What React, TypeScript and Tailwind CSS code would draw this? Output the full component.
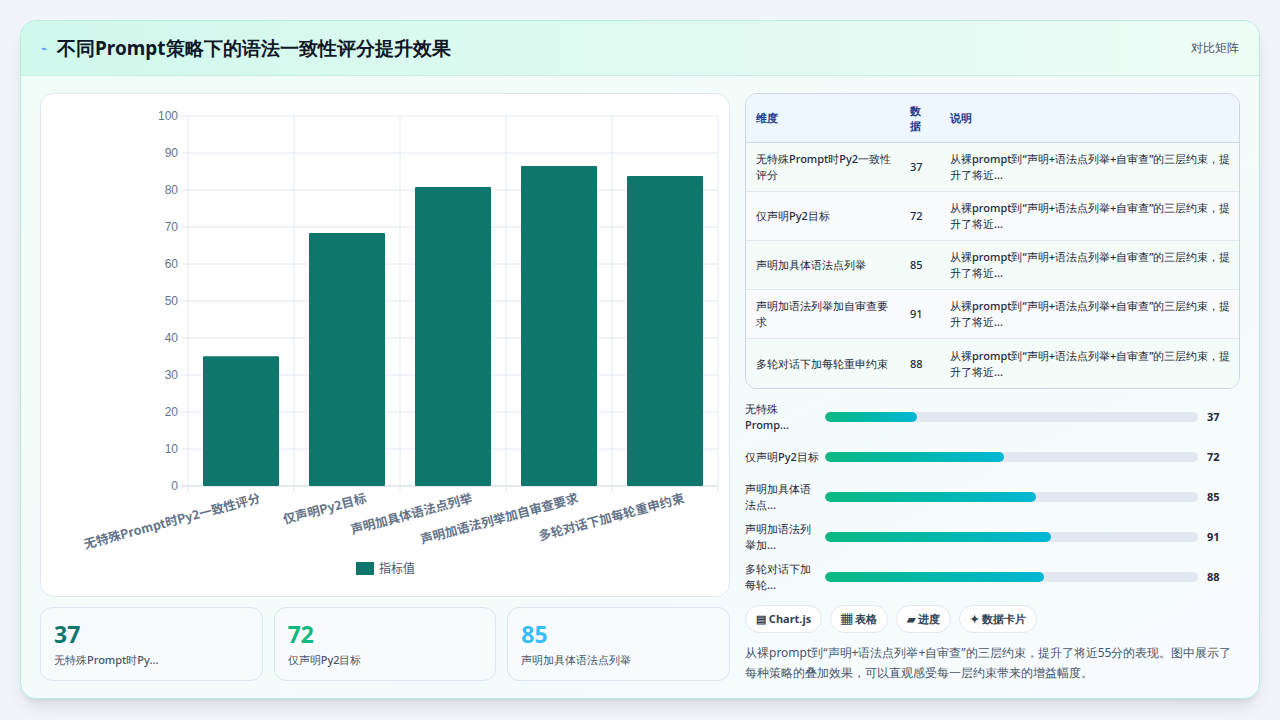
import React from "react";

const rows = [
  { n: "无特殊Prompt时Py2一致性评分", s: "无特殊Promp...", v: 37, b: 35.1 },
  { n: "仅声明Py2目标", s: "仅声明Py2目标", v: 72, b: 68.4 },
  { n: "声明加具体语法点列举", s: "声明加具体语法点...", v: 85, b: 80.8 },
  { n: "声明加语法列举加自审查要求", s: "声明加语法列举加...", v: 91, b: 86.5 },
  { n: "多轮对话下加每轮重申约束", s: "多轮对话下加每轮...", v: 88, b: 83.8 },
];
const desc = "从裸prompt到“声明+语法点列举+自审查”的三层约束，提升了将近...";

function Chart() {
  const x0 = 147, x1 = 677, y0 = 22, y1 = 392;
  const cw = (x1 - x0) / 5;
  const ticks = [0, 10, 20, 30, 40, 50, 60, 70, 80, 90, 100];
  return (
    <svg width="688" height="502" className="block">
      {ticks.map((t) => {
        const y = y1 - (t / 100) * (y1 - y0);
        return (
          <g key={t}>
            <line x1={x0 - 6} x2={x1} y1={y} y2={y} stroke={t === 0 ? "#cbd5e1" : "#e2e8f0"} />
            <text x={x0 - 10} y={y + 4} textAnchor="end" fontSize="12" fill="#64748b" fontFamily="Liberation Sans, sans-serif">{t}</text>
          </g>
        );
      })}
      {[0, 1, 2, 3, 4, 5].map((i) => (
        <line key={i} x1={x0 + i * cw} x2={x0 + i * cw} y1={y0} y2={y1 + 6} stroke="#e2e8f0" />
      ))}
      {rows.map((r, i) => {
        const h = (r.b / 100) * (y1 - y0);
        return <rect key={i} x={x0 + i * cw + 15} y={y1 - h} width={76} height={h} fill="#0f766e" rx="1" />;
      })}
      {rows.map((r, i) => (
        <text key={i} transform={`translate(${x0 + i * cw + cw / 2 + 20},${y1 + 16}) rotate(-15)`} textAnchor="end" fontSize="12.5" fontWeight="bold" fill="#64748b" fontFamily="Noto Sans CJK SC, sans-serif">{r.n}</text>
      ))}
      <rect x={315} y={468} width={18} height={13} fill="#0f766e" />
      <text x={338} y={479} fontSize="12" fill="#475569" fontFamily="Noto Sans CJK SC, sans-serif">指标值</text>
    </svg>
  );
}

export default function App() {
  return (
    <div className="w-[1280px] h-[720px] bg-[#f1f5f9] p-[20px] pb-[21px] font-['Noto_Sans_CJK_SC',sans-serif]">
      <div className="h-full rounded-[16px] border border-[#b8ecdd] bg-gradient-to-br from-[#f0fdf7] to-[#f8fbff] overflow-hidden flex flex-col shadow-lg">
        <div className="h-[55px] shrink-0 flex items-center justify-between px-[20px] bg-gradient-to-r from-[#d0f8ec] to-[#eefcf6] border-b border-[#c9efe2]">
          <div className="flex items-center gap-[10px]">
            <span className="text-[10px] text-[#3b82f6]">⌁</span>
            <h1 className="text-[19px] font-bold text-[#0f172a]">不同Prompt策略下的语法一致性评分提升效果</h1>
          </div>
          <span className="text-[12px] text-[#475569]">对比矩阵</span>
        </div>
        <div className="flex-1 flex gap-[15px] px-[19px] pt-[17px] pb-[17px]">
          <div className="w-[690px] flex flex-col gap-[10px]">
            <div className="h-[504px] bg-white rounded-[14px] border border-[#e2e8f0]">
              <Chart />
            </div>
            <div className="flex gap-[11px]">
              {[
                { v: 37, c: "text-[#0f766e]", l: "无特殊Prompt时Py..." },
                { v: 72, c: "text-[#10b981]", l: "仅声明Py2目标" },
                { v: 85, c: "text-[#38bdf8]", l: "声明加具体语法点列举" },
              ].map((s, i) => (
                <div key={i} className="flex-1 h-[74px] rounded-[12px] border border-[#dbe5f0] bg-[#f8fbfe] px-[13px] pt-[12px]">
                  <div className={`text-[23px] font-bold leading-[28px] ${s.c}`}>{s.v}</div>
                  <div className="text-[11px] text-[#475569] mt-[4px] font-medium">{s.l}</div>
                </div>
              ))}
            </div>
          </div>
          <div className="flex-1 flex flex-col">
            <div className="rounded-[12px] border border-[#cbd5e1] overflow-hidden bg-white">
              <div className="flex bg-[#eef6ff] border-b border-[#c7d6e6] h-[49px] items-center text-[11px] font-bold text-[#1e3a8a]">
                <div className="w-[154px] pl-[10px]">维度</div>
                <div className="w-[40px] leading-[15px] pl-[10px]">数<br />据</div>
                <div className="pl-[10px]">说明</div>
              </div>
              {rows.map((r, i) => (
                <div key={i} className={`flex h-[49px] items-center text-[11px] font-medium text-[#1e293b] leading-[16px] ${i < 4 ? "border-b border-[#e2e8f0]" : ""} ${i % 2 ? "bg-[#f8fafc]" : "bg-[#f3fcf8]"}`}>
                  <div className="w-[154px] pl-[10px] pr-[8px]">{r.n}</div>
                  <div className="w-[40px] pl-[10px]">{r.v}</div>
                  <div className="flex-1 pl-[10px] pr-[8px]">{desc}</div>
                </div>
              ))}
            </div>
            <div className="flex flex-col gap-[8px] mt-[12px]">
              {rows.map((r, i) => (
                <div key={i} className="flex items-center h-[32px]">
                  <div className="w-[80px] text-[11px] font-medium leading-[16px] text-[#1e293b] pr-[4px]">{r.s}</div>
                  <div className="w-[373px] h-[10px] rounded-full bg-[#e2e8f0] overflow-hidden">
                    <div className="h-full rounded-full bg-gradient-to-r from-[#10b981] to-[#06b6d4]" style={{ width: `${(r.b / 100) * 70}%`, }} />
                  </div>
                  <div className="ml-[9px] text-[11px] font-bold text-[#1e293b]">{r.v}</div>
                </div>
              ))}
            </div>
            <div className="flex gap-[8px] mt-[12px]">
              {["▤ Chart.js", "▦ 表格", "▰ 进度", "✦ 数据卡片"].map((c) => (
                <span key={c} className="h-[28px] px-[10px] rounded-full border border-[#e2e8f0] bg-white flex items-center text-[11px] font-bold text-[#334155]">{c}</span>
              ))}
            </div>
            <p className="mt-[10px] text-[12px] leading-[20px] text-[#475569]">从裸prompt到“声明+语法点列举+自审查”的三层约束，提升了将近55分的表现。图中展示了每种策略的叠加效果，可以直观感受每一层约束带来的增益幅度。</p>
          </div>
        </div>
      </div>
    </div>
  );
}
